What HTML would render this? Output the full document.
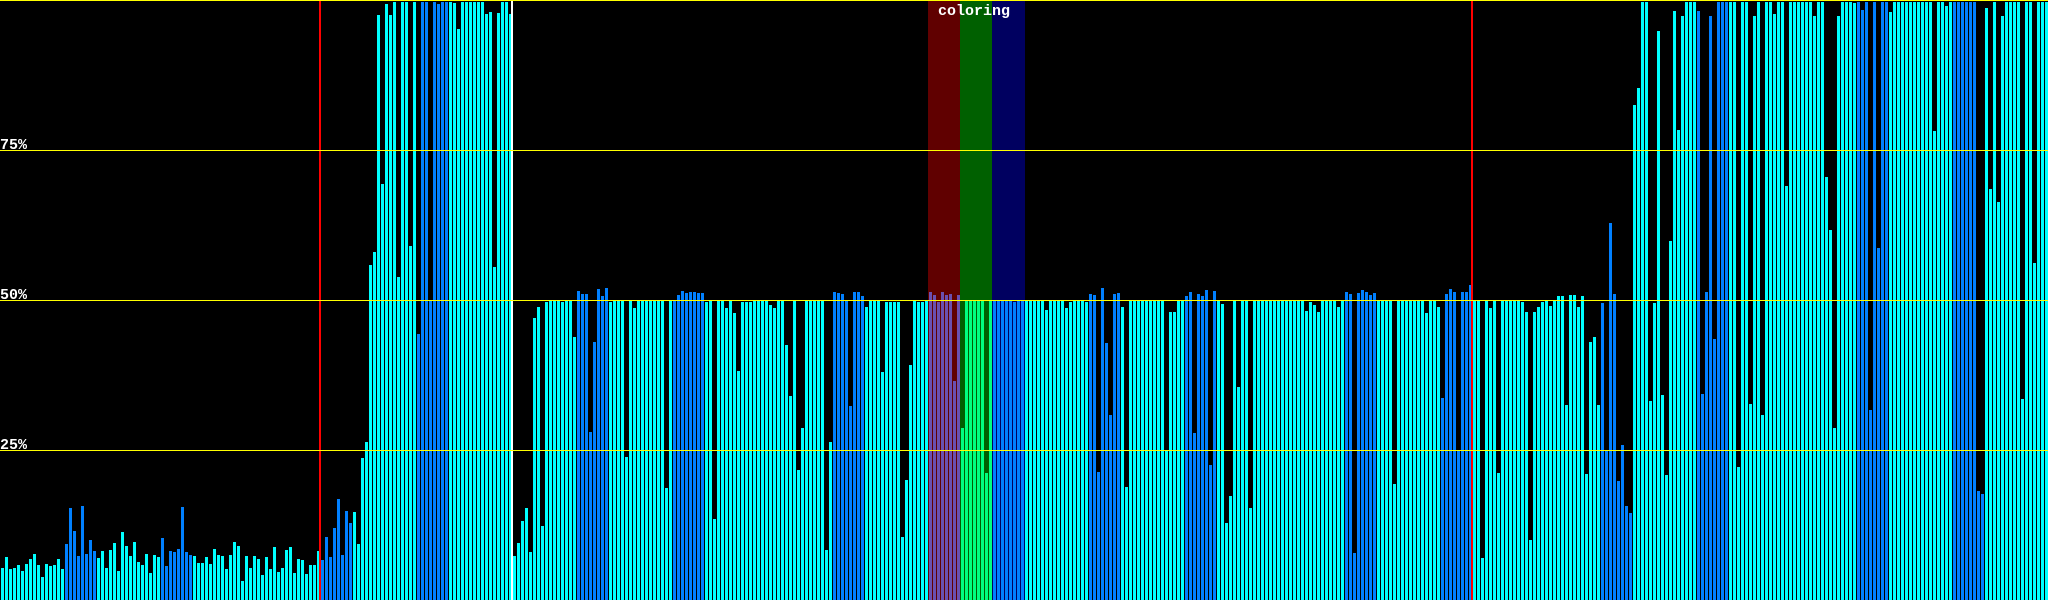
<!DOCTYPE html>
<html><head><meta charset="utf-8"><title>coloring</title>
<style>
html,body{margin:0;padding:0;background:#000;width:2048px;height:600px;overflow:hidden}
#p{position:relative;width:2048px;height:600px;background:#000;overflow:hidden}
.d{position:absolute;top:0;height:600px}
#g{position:absolute;left:0;top:0;width:2048px;height:600px;display:flex;align-items:stretch;--t:300}
#g i,#g b,#g u,#g s{display:block;flex:none;width:3px;margin-left:1px;margin-top:calc(var(--t)*1px)}
#g i{background:#0ff}#g b{background:#0080ff}#g u{background:#6a50b0}#g s{background:#00ff80}
.h{position:absolute;left:0;width:2048px;height:1px;background:#ff0}
.v{position:absolute;top:1px;width:2px;height:599px}
.x{position:absolute;color:#fff;font:bold 15px/17px "Liberation Mono",monospace;white-space:pre}
</style></head><body><div id="p">
<div class="d" style="left:928px;width:32px;background:#600000"></div>
<div class="d" style="left:960px;width:32px;background:#006000"></div>
<div class="d" style="left:992px;width:33px;background:#000060"></div>
<div id="g">
<i style=--t:568></i><i style=--t:557></i><i style=--t:569></i><i style=--t:568></i><i style=--t:565></i><i style=--t:571></i><i style=--t:564></i><i style=--t:559></i>
<i style=--t:554></i><i style=--t:565></i><i style=--t:577></i><i style=--t:564></i><i style=--t:566></i><i style=--t:565></i><i style=--t:559></i><i style=--t:569></i>
<b style=--t:544></b><b style=--t:508></b><b style=--t:531></b><b style=--t:556></b><b style=--t:506></b><b style=--t:554></b><b style=--t:540></b><b style=--t:551></b>
<i style=--t:558></i><i style=--t:551></i><i style=--t:568></i><i style=--t:550></i><i style=--t:543></i><i style=--t:571></i><i style=--t:532></i><i style=--t:546></i>
<i style=--t:556></i><i style=--t:542></i><i style=--t:562></i><i style=--t:565></i><i style=--t:554></i><i style=--t:573></i><i style=--t:555></i><i style=--t:557></i>
<b style=--t:538></b><b style=--t:566></b><b style=--t:551></b><b style=--t:552></b><b style=--t:549></b><b style=--t:507></b><b style=--t:552></b><b style=--t:555></b>
<i style=--t:556></i><i style=--t:563></i><i style=--t:563></i><i style=--t:557></i><i style=--t:564></i><i style=--t:549></i><i style=--t:555></i><i style=--t:556></i>
<i style=--t:569></i><i style=--t:555></i><i style=--t:542></i><i style=--t:546></i><i style=--t:581></i><i style=--t:556></i><i style=--t:568></i><i style=--t:556></i>
<i style=--t:559></i><i style=--t:575></i><i style=--t:557></i><i style=--t:569></i><i style=--t:547></i><i style=--t:572></i><i style=--t:568></i><i style=--t:550></i>
<i style=--t:547></i><i style=--t:573></i><i style=--t:559></i><i style=--t:560></i><i style=--t:574></i><i style=--t:565></i><i style=--t:565></i><i style=--t:551></i>
<b style=--t:560></b><b style=--t:537></b><b style=--t:557></b><b style=--t:528></b><b style=--t:499></b><b style=--t:555></b><b style=--t:511></b><b style=--t:523></b>
<i style=--t:512></i><i style=--t:544></i><i style=--t:458></i><i style=--t:442></i><i style=--t:265></i><i style=--t:252></i><i style=--t:15></i><i style=--t:184></i>
<i style=--t:4></i><i style=--t:15></i><i style=--t:2></i><i style=--t:277></i><i style=--t:2></i><i style=--t:2></i><i style=--t:246></i><i style=--t:2></i>
<b style=--t:334></b><b style=--t:2></b><b style=--t:2></b><b style=--t:300></b><b style=--t:2></b><b style=--t:4></b><b style=--t:2></b><b style=--t:2></b>
<i style=--t:2></i><i style=--t:3></i><i style=--t:29></i><i style=--t:2></i><i style=--t:2></i><i style=--t:2></i><i style=--t:2></i><i style=--t:2></i>
<i style=--t:2></i><i style=--t:14></i><i style=--t:12></i><i style=--t:267></i><i style=--t:13></i><i style=--t:2></i><i style=--t:2></i><i style=--t:14></i>
<i style=--t:556></i><i style=--t:543></i><i style=--t:521></i><i style=--t:508></i><i style=--t:552></i><i style=--t:318></i><i style=--t:307></i><i style=--t:526></i>
<i style=--t:302></i><i></i><i></i><i></i><i style=--t:302></i><i></i><i></i><i style=--t:337></i>
<b style=--t:291></b><b style=--t:294></b><b style=--t:294></b><b style=--t:432></b><b style=--t:342></b><b style=--t:289></b><b style=--t:296></b><b style=--t:288></b>
<i style=--t:302></i><i></i><i></i><i></i><i style=--t:457></i><i></i><i style=--t:308></i><i></i>
<i></i><i></i><i></i><i></i><i></i><i></i><i style=--t:488></i><i></i>
<b></b><b style=--t:295></b><b style=--t:291></b><b style=--t:293></b><b style=--t:292></b><b style=--t:292></b><b style=--t:293></b><b style=--t:293></b>
<i style=--t:302></i><i></i><i style=--t:519></i><i></i><i></i><i style=--t:308></i><i></i><i style=--t:313></i>
<i style=--t:371></i><i style=--t:302></i><i style=--t:302></i><i style=--t:302></i><i></i><i></i><i></i><i></i>
<i style=--t:305></i><i style=--t:308></i><i></i><i></i><i style=--t:345></i><i style=--t:396></i><i></i><i style=--t:470></i>
<i style=--t:428></i><i></i><i></i><i></i><i></i><i></i><i style=--t:550></i><i style=--t:442></i>
<b style=--t:292></b><b style=--t:293></b><b style=--t:294></b><b></b><b style=--t:406></b><b style=--t:292></b><b style=--t:292></b><b style=--t:296></b>
<i style=--t:307></i><i></i><i></i><i></i><i style=--t:372></i><i style=--t:302></i><i style=--t:302></i><i style=--t:302></i>
<i style=--t:302></i><i style=--t:537></i><i style=--t:480></i><i style=--t:365></i><i></i><i style=--t:302></i><i style=--t:302></i><i></i>
<u style=--t:292></u><u style=--t:295></u><u style=--t:302></u><u style=--t:292></u><u style=--t:295></u><u style=--t:294></u><u style=--t:381></u><u style=--t:295></u>
<s style=--t:428></s><s></s><s></s><s></s><s></s><s></s><s style=--t:473></s><s></s>
<b></b><b></b><b></b><b></b><b></b><b style=--t:302></b><b></b><b></b>
<i></i><i></i><i></i><i></i><i></i><i style=--t:310></i><i></i><i></i>
<i></i><i></i><i style=--t:308></i><i style=--t:302></i><i></i><i></i><i></i><i style=--t:302></i>
<b style=--t:294></b><b style=--t:295></b><b style=--t:472></b><b style=--t:288></b><b style=--t:343></b><b style=--t:415></b><b style=--t:294></b><b style=--t:293></b>
<i style=--t:307></i><i style=--t:487></i><i></i><i></i><i></i><i></i><i></i><i></i>
<i></i><i></i><i></i><i style=--t:450></i><i style=--t:312></i><i style=--t:312></i><i></i><i></i>
<b style=--t:296></b><b style=--t:292></b><b style=--t:433></b><b style=--t:294></b><b style=--t:296></b><b style=--t:290></b><b style=--t:465></b><b style=--t:291></b>
<i></i><i style=--t:304></i><i style=--t:523></i><i style=--t:496></i><i></i><i style=--t:387></i><i></i><i></i>
<i style=--t:508></i><i></i><i></i><i></i><i></i><i></i><i></i><i></i>
<i></i><i></i><i></i><i></i><i></i><i></i><i style=--t:311></i><i style=--t:302></i>
<i style=--t:305></i><i style=--t:312></i><i></i><i></i><i></i><i></i><i style=--t:307></i><i></i>
<b style=--t:292></b><b style=--t:294></b><b style=--t:553></b><b style=--t:293></b><b style=--t:290></b><b style=--t:292></b><b style=--t:295></b><b style=--t:293></b>
<i></i><i></i><i></i><i></i><i style=--t:484></i><i></i><i></i><i></i>
<i></i><i></i><i></i><i></i><i style=--t:313></i><i></i><i></i><i style=--t:307></i>
<b style=--t:398></b><b style=--t:294></b><b style=--t:289></b><b style=--t:292></b><b style=--t:450></b><b style=--t:292></b><b style=--t:292></b><b style=--t:285></b>
<i></i><i></i><i style=--t:558></i><i></i><i style=--t:308></i><i></i><i style=--t:473></i><i></i>
<i></i><i></i><i></i><i></i><i style=--t:302></i><i style=--t:312></i><i style=--t:540></i><i style=--t:312></i>
<i style=--t:307></i><i style=--t:302></i><i style=--t:301></i><i style=--t:306></i><i style=--t:301></i><i style=--t:296></i><i style=--t:296></i><i style=--t:405></i>
<i style=--t:295></i><i style=--t:295></i><i style=--t:307></i><i style=--t:296></i><i style=--t:474></i><i style=--t:342></i><i style=--t:337></i><i style=--t:405></i>
<b style=--t:303></b><b style=--t:450></b><b style=--t:223></b><b style=--t:294></b><b style=--t:481></b><b style=--t:445></b><b style=--t:506></b><b style=--t:513></b>
<i style=--t:105></i><i style=--t:88></i><i style=--t:2></i><i style=--t:2></i><i style=--t:401></i><i style=--t:303></i><i style=--t:31></i><i style=--t:395></i>
<i style=--t:475></i><i style=--t:241></i><i style=--t:11></i><i style=--t:130></i><i style=--t:16></i><i style=--t:2></i><i style=--t:2></i><i style=--t:2></i>
<b style=--t:11></b><b style=--t:394></b><b style=--t:292></b><b style=--t:16></b><b style=--t:339></b><b style=--t:2></b><b style=--t:2></b><b style=--t:2></b>
<i style=--t:2></i><i style=--t:2></i><i style=--t:467></i><i style=--t:2></i><i style=--t:2></i><i style=--t:404></i><i style=--t:16></i><i style=--t:2></i>
<i style=--t:415></i><i style=--t:2></i><i style=--t:2></i><i style=--t:14></i><i style=--t:2></i><i style=--t:2></i><i style=--t:186></i><i style=--t:2></i>
<i style=--t:2></i><i style=--t:2></i><i style=--t:2></i><i style=--t:2></i><i style=--t:2></i><i style=--t:16></i><i style=--t:2></i><i style=--t:2></i>
<i style=--t:177></i><i style=--t:230></i><i style=--t:428></i><i style=--t:16></i><i style=--t:2></i><i style=--t:2></i><i style=--t:2></i><i style=--t:3></i>
<b style=--t:2></b><b style=--t:10></b><b style=--t:2></b><b style=--t:410></b><b style=--t:2></b><b style=--t:248></b><b style=--t:2></b><b style=--t:2></b>
<i style=--t:12></i><i style=--t:2></i><i style=--t:2></i><i style=--t:2></i><i style=--t:2></i><i style=--t:2></i><i style=--t:2></i><i style=--t:2></i>
<i style=--t:2></i><i style=--t:2></i><i style=--t:2></i><i style=--t:131></i><i style=--t:2></i><i style=--t:2></i><i style=--t:6></i><i style=--t:2></i>
<b style=--t:2></b><b style=--t:2></b><b style=--t:2></b><b style=--t:2></b><b style=--t:2></b><b style=--t:2></b><b style=--t:491></b><b style=--t:494></b>
<i style=--t:8></i><i style=--t:189></i><i style=--t:2></i><i style=--t:202></i><i style=--t:16></i><i style=--t:2></i><i style=--t:2></i><i style=--t:2></i>
<i style=--t:2></i><i style=--t:399></i><i style=--t:2></i><i style=--t:2></i><i style=--t:263></i><i style=--t:2></i><i style=--t:2></i><i style=--t:2></i>
</div>
<div class="v" style="left:319px;background:#f00"></div>
<div class="v" style="left:1471px;background:#f00"></div>
<div class="v" style="left:511px;background:#fff"></div>
<div class="h" style="top:0"></div>
<div class="h" style="top:150px"></div>
<div class="h" style="top:300px"></div>
<div class="h" style="top:450px"></div>
<div class="x" style="left:938px;top:3px">coloring</div>
<div class="x" style="left:0;top:137px">75%</div>
<div class="x" style="left:0;top:287px">50%</div>
<div class="x" style="left:0;top:437px">25%</div>
</div></body></html>
